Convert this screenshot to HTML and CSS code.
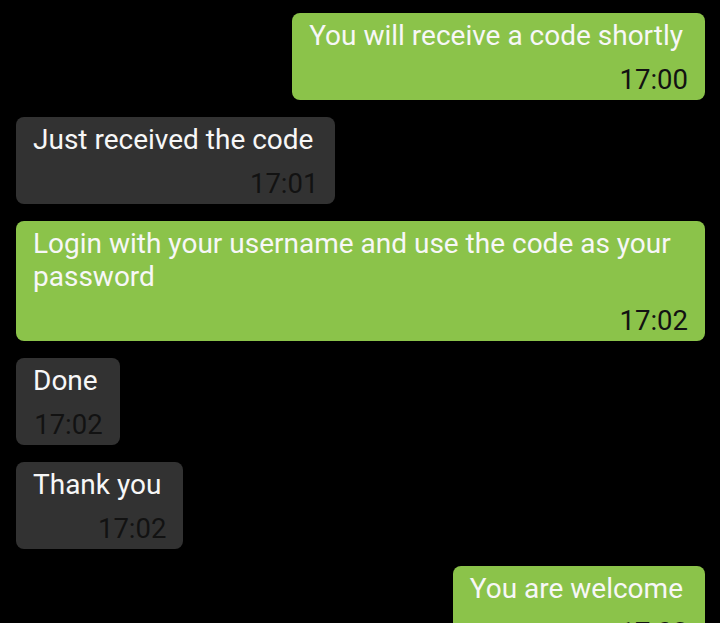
FILE: index.html
```html
<!DOCTYPE html>
<html>
<head>
<meta charset="utf-8">
<link rel="stylesheet" href="styles.css">
</head>
<body>
<div class="chat">
  <div class="msg out"><div class="text">You will receive a code shortly</div><div class="time">17:00</div></div>
  <div class="msg in"><div class="text">Just received the code</div><div class="time">17:01</div></div>
  <div class="msg out"><div class="text">Login with your username and use the code as your password</div><div class="time">17:02</div></div>
  <div class="msg in"><div class="text">Done</div><div class="time">17:02</div></div>
  <div class="msg in"><div class="text">Thank you</div><div class="time">17:02</div></div>
  <div class="msg out"><div class="text">You are welcome</div><div class="time">17:03</div></div>
</div>
</body>
</html>
```
FILE: styles.css
```css
html, body {
  margin: 0;
  padding: 0;
  background: #000;
  height: 623px;
  overflow: hidden;
}
.chat {
  display: flex;
  flex-direction: column;
  align-items: flex-start;
  gap: 17px;
  padding: 13px 15px 0 16px;
  font-family: Roboto, "Noto Sans", sans-serif;
  font-size: 28px;
  line-height: 33px;
}
.msg {
  box-sizing: border-box;
  max-width: 100%;
  padding: 6px 17px 4px 17px;
  border-radius: 8px;
}
.msg.out {
  align-self: flex-end;
  background: #8bc34a;
}
.msg.in {
  background: #323232;
}
.text {
  padding-right: 5px;
  color: #f7f7f7;
}
.time {
  margin-top: 11px;
  text-align: right;
  color: #121212;
  font-size: 27.5px;
}
```
